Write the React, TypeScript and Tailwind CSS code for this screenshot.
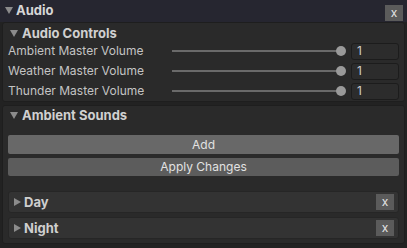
import React from 'react';

const Down = () => (
  <svg width="8" height="7" viewBox="0 0 8 7">
    <polygon points="0,0 8,0 4,7" fill="#8c8c8c" />
  </svg>
);

const Right = () => (
  <svg width="7" height="8" viewBox="0 0 7 8">
    <polygon points="0,0 7,4 0,8" fill="#8c8c8c" />
  </svg>
);

const XButton = () => (
  <div className="w-[18px] h-[16px] bg-[#5b5b5b] flex items-center justify-center text-[12px] leading-none text-[#e6e6e6] pb-[1px]">
    x
  </div>
);

const SliderRow = ({ label }: { label: string }) => (
  <div className="flex items-center h-[20px]">
    <div className="w-[164px] text-[#c4c4c4] whitespace-nowrap">{label}</div>
    <div className="relative w-[175px] h-[10px] flex items-center">
      <div className="w-[170px] h-[2px] bg-[#6a6a6a]" />
      <div className="absolute left-[164px] top-0 w-[10px] h-[10px] rounded-full bg-[#9a9a9a]" />
    </div>
    <div className="ml-[5px] w-[48px] h-[17px] rounded-[3px] border border-[#1c1c1c] bg-[#2c2c2c] text-[#cfcfcf] pl-[5px] flex items-center">
      1
    </div>
  </div>
);

const Row = ({ label }: { label: string }) => (
  <div className="h-[22px] rounded-[3px] border border-[#262626] bg-[#333333] flex items-center pl-[5px] pr-[4px]">
    <Right />
    <span className="ml-[3px] font-bold text-[13px] text-[#cfcfcf]">{label}</span>
    <div className="ml-auto">
      <XButton />
    </div>
  </div>
);

export default function App() {
  return (
    <div
      className="w-[407px] h-[248px] bg-[#222222] text-[12px] leading-none overflow-hidden"
      style={{ fontFamily: 'Inter, "Noto Sans", sans-serif' }}
    >
      <div className="h-[22px] bg-[#262630] flex pl-[5px] pr-[4px]">
        <div className="flex items-center h-[20px]">
          <Down />
          <span className="ml-[3px] font-bold text-[13px] text-[#d6d6d6]">Audio</span>
        </div>
        <div className="ml-auto mt-[5px]">
          <XButton />
        </div>
      </div>

      <div className="px-[2px] flex flex-col gap-[3px]">
        <div className="rounded-[3px] border border-[#1e1e1e] bg-[#2a2a2a] px-[5px] pt-[4px]">
          <div className="flex items-center pl-[2px] h-[12px]">
            <Down />
            <span className="ml-[4px] font-bold text-[13px] text-[#d0d0d0]">Audio Controls</span>
          </div>
          <div className="mt-[2px]">
            <SliderRow label="Ambient Master Volume" />
            <SliderRow label="Weather Master Volume" />
            <SliderRow label="Thunder Master Volume" />
          </div>
        </div>

        <div className="rounded-[3px] border border-[#1e1e1e] bg-[#2a2a2a] px-[5px] pt-[3px] h-[139px]">
          <div className="flex items-center pl-[2px] h-[12px]">
            <Down />
            <span className="ml-[4px] font-bold text-[13px] text-[#d0d0d0]">Ambient Sounds</span>
          </div>
          <div className="mt-[14px] flex flex-col gap-[4px]">
            <div className="h-[19px] rounded-[2px] bg-[#686868] text-[#e2e2e2] flex items-center justify-center">
              Add
            </div>
            <div className="h-[18px] rounded-[2px] bg-[#5c5c5c] text-[#e2e2e2] flex items-center justify-center">
              Apply Changes
            </div>
          </div>
          <div className="mt-[15px] flex flex-col gap-[4px]">
            <Row label="Day" />
            <Row label="Night" />
          </div>
        </div>
      </div>
    </div>
  );
}
